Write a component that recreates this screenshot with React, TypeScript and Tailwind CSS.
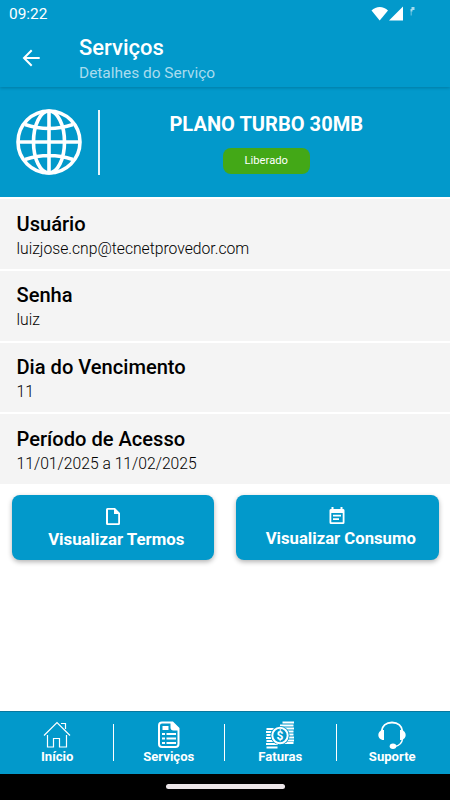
interface DetailProps {
  label: string;
  value: string;
}

const details: DetailProps[] = [
  { label: "Usuário", value: "luizjose.cnp@tecnetprovedor.com" },
  { label: "Senha", value: "luiz" },
  { label: "Dia do Vencimento", value: "11" },
  { label: "Período de Acesso", value: "11/01/2025 a 11/02/2025" },
];

function HomeIcon() {
  return (
    <svg width="28" height="28" viewBox="0 0 28 28" fill="none" stroke="white" strokeWidth="1.2">
      <path d="M1 14.5 14 1.5l13 13" />
      <path d="M4.5 14v12h6v-8.500h6V26h7V14" />
      <path d="M18 2.500h4.500V8" />
    </svg>
  );
}

function ServicesIcon() {
  return (
    <svg width="28" height="28" viewBox="0 0 28 28" fill="none" stroke="white">
      <path d="M7 1.500h10.500l6 6V23a3 3 0 0 1-3 3H7a3 3 0 0 1-3-3V4.500a3 3 0 0 1 3-3z" strokeWidth="2" />
      <path d="M15.500 1.500h2.500l6 6v2h-5.500a3 3 0 0 1-3-3z" fill="white" stroke="none" />
      <path d="M7.500 7h6" strokeWidth="4" />
      <path d="M7 13h3M11.500 13h9.500M7 17.500h3M11.500 17.500h9.500M7 22h3M11.500 22h9.500" strokeWidth="2.200" />
    </svg>
  );
}

function InvoiceIcon() {
  return (
    <svg width="28" height="28" viewBox="0 0 28 28" fill="none" stroke="white">
      <path
        d="M16.500 1.500H28M14 4.500h13.500M18 7.500h10M20 10.500h7.500M20 13.500h7.500M20 16.500h8M20 19.500h8M18 22h9.500M0.500 8H9M0 11h8M.5 14H8M0 17h8M.5 20H9M0 23h12M.5 26.500h11"
        strokeWidth="2.200"
      />
      <circle cx="14" cy="14.500" r="9.600" fill="#0299cb" stroke="none" />
      <circle cx="14" cy="14.500" r="7.700" strokeWidth="2" />
      <text x="14" y="18.700" textAnchor="middle" fontSize="12" fontWeight="700" fill="white" stroke="none" fontFamily="Roboto, sans-serif">
        $
      </text>
    </svg>
  );
}

function SupportIcon() {
  return (
    <svg width="28" height="28" viewBox="0 0 28 28" fill="none" stroke="white">
      <path d="M3.500 10.500C4 5 8 1.500 14 1.500S24 5 24.500 10.500" strokeWidth="1.900" />
      <path d="M24.500 18c-.5 4-3 6.500-7.500 7.500" strokeWidth="1.500" />
      <path d="M6 9v10H4.500C2 18.500.3 16.500.3 14s1.700-4.500 4.200-5zM22 9v10h1.500c2.500-.5 4.200-2.500 4.200-5s-1.700-4.500-4.200-5z" fill="white" stroke="none" />
      <ellipse cx="15" cy="25.300" rx="3.300" ry="2.700" fill="white" stroke="none" />
    </svg>
  );
}

const tabs = [
  { name: "Início", icon: <HomeIcon /> },
  { name: "Serviços", icon: <ServicesIcon /> },
  { name: "Faturas", icon: <InvoiceIcon /> },
  { name: "Suporte", icon: <SupportIcon /> },
];

export default function App() {
  return (
    <div className="flex h-[800px] w-[450px] flex-col overflow-hidden bg-white font-['Roboto',sans-serif]">
      <header className="z-10 h-[87px] shrink-0 bg-[#0299cb] text-white shadow-[0_1px_3px_rgba(0,0,0,0.2)]">
        <div className="flex h-7 items-center justify-between pl-[9px] pr-[34px]">
          <span className="text-[15.400px] leading-7">09:22</span>
          <svg width="45" height="16" viewBox="0 0 45 16" fill="white">
            <path d="M.5 4.500C5-.2 12.500-.2 17 4.500L8.700 14.500z" />
            <path d="M32 .5V14.500H18z" />
            <path d="M40.500 1h3v3h-2v1.500h-2V3h1z" opacity=".65" />
            <path d="M39.500 5.500H41v4h-1.500z" opacity=".3" />
          </svg>
        </div>
        <div className="flex items-center pl-[22px]">
          <svg width="18" height="18" viewBox="0 0 18 18" fill="none" stroke="white" strokeWidth="2" className="mt-[3px]">
            <path d="M17.700 9H2M9.700 1.300 2 9l7.700 7.700" />
          </svg>
          <div className="pl-[39px] pt-1.5">
            <h1 className="text-[22px] font-medium leading-7">Serviços</h1>
            <p className="text-[15.450px] leading-[22px] text-[#a9dcee]">Detalhes do Serviço</p>
          </div>
        </div>
      </header>

      <section className="flex h-[110px] shrink-0 bg-[#0299cb] pl-4 pt-[22px] text-white">
        <svg width="66" height="66" viewBox="0 0 66 66" fill="none" stroke="white" strokeWidth="3.600">
          <circle cx="33" cy="33" r="31" />
          <ellipse cx="33" cy="33" rx="15.500" ry="31" />
          <path d="M33 2v62M2 33h62M9 15.500q24 8 48 0M9 50.500q24-8 48 0" />
        </svg>
        <div className="ml-4 mt-px h-[65px] w-[1.500px] bg-[#e5f4fa]" />
        <div className="flex flex-1 flex-col items-center pr-[17px]">
          <h2 className="text-[20.100px] font-bold leading-[30px]">PLANO TURBO 30MB</h2>
          <span className="mt-[9px] flex h-[26px] w-[87px] items-center justify-center rounded-lg bg-[#43a817] pt-px text-[11.200px]">
            Liberado
          </span>
        </div>
      </section>

      <dl className="flex shrink-0 flex-col gap-[2px] pt-[2px]">
        {details.map((item) => (
          <div key={item.label} className="h-[69.750px] bg-[#f4f4f4] pl-[16.500px] pt-[12.600px] text-black">
            <dt className="text-[20.100px] font-medium leading-6">{item.label}</dt>
            <dd className="text-[15.700px] font-light leading-[25.500px]">{item.value}</dd>
          </div>
        ))}
      </dl>

      <div className="flex gap-[22px] pl-[11.500px] pr-[11.500px] pt-[11px] text-white">
        <button className="flex h-[65px] flex-1 flex-col items-center rounded-lg bg-[#0299cb] pt-3 shadow-[0_2px_5px_rgba(0,0,0,0.3)]">
          <svg width="16" height="19" viewBox="0 0 16 19" fill="white">
            <path fillRule="evenodd" d="M2.500 1H10l5 5v10.500a1.500 1.500 0 0 1-1.500 1.500h-11A1.500 1.500 0 0 1 1 16.500v-14A1.500 1.500 0 0 1 2.500 1zm.5 1.700v13.600h10.200V7H9V2.700z" />
          </svg>
          <span className="whitespace-nowrap pl-[7px] text-[16.800px] font-bold leading-[26px]">Visualizar Termos</span>
        </button>
        <button className="flex h-[65px] flex-1 flex-col items-center rounded-lg bg-[#0299cb] pt-3 shadow-[0_2px_5px_rgba(0,0,0,0.3)]">
          <svg width="16" height="19" viewBox="0 0 16 19" fill="white">
            <path fillRule="evenodd" d="M2.500 0h2v2h7V0h2v2A1.500 1.500 0 0 1 15.500 3.500v12A1.500 1.500 0 0 1 14 17H2a1.500 1.500 0 0 1-1.500-1.500v-12A1.500 1.500 0 0 1 2.500 2zM2.300 6v9.200h11.400V6z" />
            <path d="M4 7.700h8v1.800H4zM4 11.300h6v1.800H4z" />
          </svg>
          <span className="whitespace-nowrap pl-[7px] text-[16.700px] font-bold leading-[26px]">Visualizar Consumo</span>
        </button>
      </div>

      <nav className="mt-auto flex h-[63px] shrink-0 border-t border-[#08789f] bg-[#0299cb] px-[2px] text-white">
        {tabs.map((tab, i) => (
          <div key={tab.name} className="flex flex-1 items-start pt-[9px]">
            <div className="flex flex-1 flex-col items-center">
              {tab.icon}
              <span className="text-[13.100px] font-bold leading-4">{tab.name}</span>
            </div>
            {i < tabs.length - 1 && <div className="mt-[3px] h-[37px] w-px bg-white" />}
          </div>
        ))}
      </nav>
      <div className="flex h-[26px] shrink-0 justify-center bg-black pt-2.5">
        <div className="h-[5px] w-[119px] rounded-full bg-[#ece6e9]" />
      </div>
    </div>
  );
}
